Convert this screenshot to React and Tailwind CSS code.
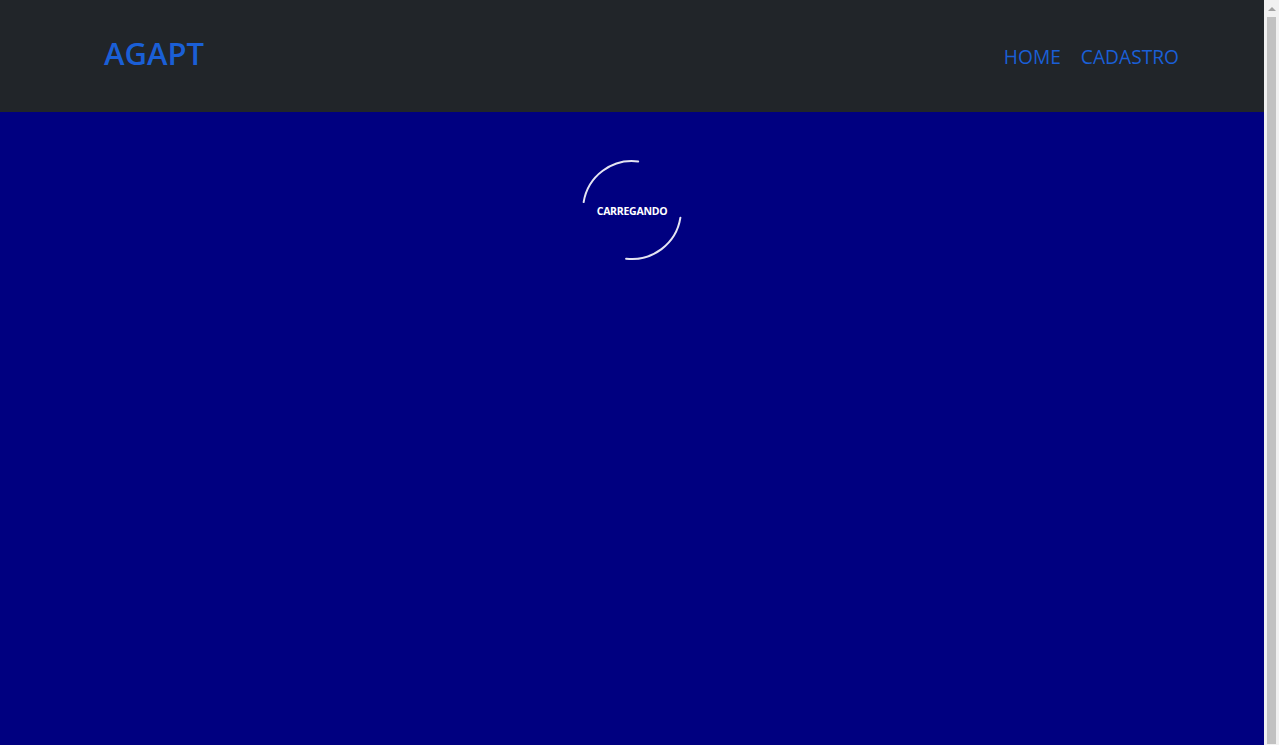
export default function App() {
  // circle r=49 -> circumference ~307.9, two quarter arcs
  return (
    <div className="flex h-screen overflow-hidden font-['Open_Sans','Segoe_UI',sans-serif]">
      <div className="flex-1 min-w-0 bg-[#000080]">
        <header className="bg-[#212529] h-[112px]">
          <div className="flex items-center justify-between pl-[104px] pr-[85px] h-full">
            <a href="#" className="text-[31px] font-semibold text-[#1a5fd6] -mt-[6px]">AGAPT</a>
            <nav className="flex items-center gap-[20px] text-[19.2px] text-[#1a5fd6] mt-[2px]">
              <a href="#">HOME</a>
              <a href="#">CADASTRO</a>
            </nav>
          </div>
        </header>

        <main className="flex justify-center pt-[46px]">
          <div className="relative w-[104px] h-[104px] flex items-center justify-center">
            <svg className="absolute inset-0" width="104" height="104" viewBox="0 0 104 104">
              <circle
                cx="52"
                cy="52"
                r="49"
                fill="none"
                stroke="#e4e4f2"
                strokeWidth="2"
                strokeDasharray="75 79"
                transform="rotate(9 52 52)"
                strokeLinecap="round"
              />
            </svg>
            <span className="text-[10.5px] font-bold text-white tracking-tight mt-[3px]">CARREGANDO</span>
          </div>
        </main>
      </div>

      {/* scrollbar */}
      <div className="w-[15px] shrink-0 bg-[#f1f1f1] flex flex-col items-center">
        <div className="h-[17px] flex items-center justify-center">
          <div className="w-0 h-0 border-l-[4px] border-r-[4px] border-b-[4px] border-l-transparent border-r-transparent border-b-[#a3a3a3]" />
        </div>
        <div className="flex-1 w-[9px] bg-[#c1c1c1] mb-[1px]" />
      </div>
    </div>
  )
}
